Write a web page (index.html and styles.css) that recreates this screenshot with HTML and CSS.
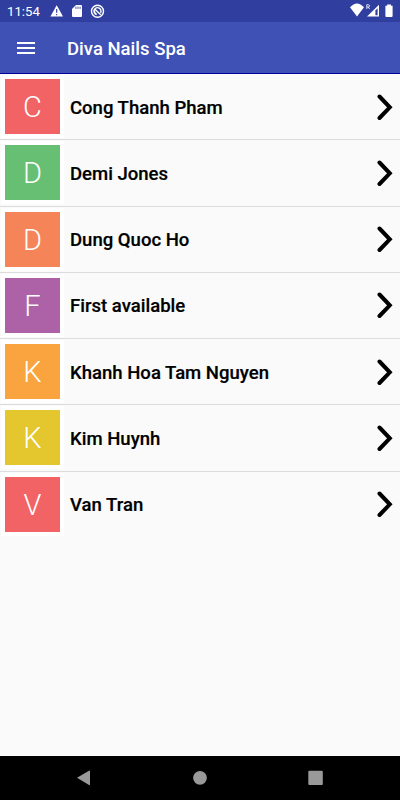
FILE: index.html
```html
<!DOCTYPE html>
<html lang="en">
<head>
<meta charset="utf-8">
<title>Diva Nails Spa</title>
<link rel="stylesheet" href="styles.css">
</head>
<body>
<div class="screen">
  <div class="status">
    <span class="time">11:54</span>
    <svg class="notices" width="56" height="22" viewBox="0 0 56 22">
      <path d="M6.7 5.2 13 16.6H.4Z" fill="#fff"/>
      <path d="M6.7 9v3.700M6.700 13.900v1.400" stroke="#303f9f" stroke-width="1.200"/>
      <path d="M26 5h5q1 0 1 1v10q0 1-1 1h-8q-1 0-1-1V9Z" fill="#fff"/>
      <path d="M25.900 6.700v2.200M28 6.700v2.200M30.100 6.700v2.200" stroke="#303f9f" stroke-width=".9"/>
      <circle cx="47.500" cy="11.200" r="6" fill="none" stroke="#fff" stroke-width="1.400"/>
      <path d="M46 14.300a3.500 3.500 0 1 1 4.600-1.500M44.700 9l6 5.800M44.300 10.500q.2 3 2.500 4" fill="none" stroke="#fff" stroke-width="1.400"/>
    </svg>
    <svg class="signals" width="46" height="22" viewBox="0 0 46 22">
      <path d="M0 7.200Q7-.4 14 7.200L7 16.500Z" fill="#fff"/>
      <path d="M16.800 9V4.700h1.500q1.200 0 1.200 1.200T18.300 7H16.800M18.200 7l1.400 2" fill="none" stroke="#fff" stroke-width=".8"/>
      <path d="M29 4.700V16.600H17Z" fill="#fff"/>
      <path d="M27.600 8.200V15.200H25.400V10.600Z" fill="#303f9f"/>
      <path d="M35.400 5.700h1.700V4.500h3.900v1.200h1.600V16q0 1-1 1h-5.200q-1 0-1-1Z" fill="#fff"/>
    </svg>
  </div>
  <header class="appbar">
    <svg class="menu" width="18" height="12" viewBox="0 0 18 12"><path d="M0 1h18M0 6h18M0 11h18" stroke="#fff" stroke-width="1.900"/></svg>
    <h1 class="title">Diva Nails Spa</h1>
  </header>
  <main class="list">
    <div class="row"><div class="tile red">C</div><span class="name">Cong Thanh Pham</span><svg class="chevron" viewBox="0 0 16 28"><path d="M2.500 3.500 12.800 14.300 2.500 25"/></svg></div>
    <div class="row"><div class="tile green">D</div><span class="name">Demi Jones</span><svg class="chevron" viewBox="0 0 16 28"><path d="M2.500 3.500 12.800 14.300 2.500 25"/></svg></div>
    <div class="row"><div class="tile orange">D</div><span class="name">Dung Quoc Ho</span><svg class="chevron" viewBox="0 0 16 28"><path d="M2.500 3.500 12.800 14.300 2.500 25"/></svg></div>
    <div class="row"><div class="tile purple">F</div><span class="name">First available</span><svg class="chevron" viewBox="0 0 16 28"><path d="M2.500 3.500 12.800 14.300 2.500 25"/></svg></div>
    <div class="row"><div class="tile amber">K</div><span class="name">Khanh Hoa Tam Nguyen</span><svg class="chevron" viewBox="0 0 16 28"><path d="M2.500 3.500 12.800 14.300 2.500 25"/></svg></div>
    <div class="row"><div class="tile yellow">K</div><span class="name">Kim Huynh</span><svg class="chevron" viewBox="0 0 16 28"><path d="M2.500 3.500 12.800 14.300 2.500 25"/></svg></div>
    <div class="row"><div class="tile red">V</div><span class="name">Van Tran</span><svg class="chevron" viewBox="0 0 16 28"><path d="M2.500 3.500 12.800 14.300 2.500 25"/></svg></div>
  </main>
  <nav class="navbar">
    <svg width="400" height="44" viewBox="0 0 400 44" fill="#999">
      <path d="M77 21.800 89 14.700q1-.5 1 .5V28.500q0 1-1 .5Z"/>
      <circle cx="200" cy="21.800" r="6.900"/>
      <rect x="308.300" y="14.800" width="14.500" height="14.200" rx="1"/>
    </svg>
  </nav>
</div>
</body>
</html>
```

FILE: styles.css
```css
body {
  margin: 0;
  font-family: Roboto, sans-serif;
  background: #fafafa;
}
.screen {
  width: 400px;
  height: 800px;
  display: flex;
  flex-direction: column;
  overflow: hidden;
}
.status {
  height: 22px;
  flex: none;
  display: flex;
  background: #303f9f;
  color: #fff;
}
.time {
  width: 43px;
  padding-left: 7px;
  font-size: 13.200px;
  line-height: 23px;
}
.signals {
  margin-left: auto;
  margin-right: 4px;
}
.appbar {
  height: 51px;
  flex: none;
  display: flex;
  align-items: center;
  background: #3f51b5;
  border-bottom: 1px solid #00009c;
}
.menu {
  margin-left: 17px;
}
.title {
  margin: 2px 0 0 32px;
  color: #fff;
  font-size: 18.550px;
  font-weight: 500;
}
.list {
  flex: 1;
}
.row {
  height: 66.250px;
  box-sizing: border-box;
  display: flex;
  align-items: center;
  padding-left: 5px;
  padding-right: 7px;
  border-bottom: 1px solid #dcdcdc;
}
.row:last-child {
  border-bottom-color: transparent;
}
.tile {
  width: 55px;
  height: 55px;
  flex: none;
  box-shadow: 0 0 0 4px #fff;
  color: #fff;
  font-size: 29px;
  font-weight: 300;
  line-height: 57px;
  text-align: center;
}
.red { background: #f16364; }
.green { background: #67bf74; }
.orange { background: #f58559; }
.purple { background: #ad62a7; }
.amber { background: #f9a43e; }
.yellow { background: #e4c62e; }
.name {
  margin-left: 10px;
  margin-top: 2px;
  font-size: 18.550px;
  font-weight: 500;
  color: #000;
  white-space: nowrap;
  -webkit-text-stroke: .2px #000;
}
.chevron {
  width: 16px;
  height: 28px;
  margin-left: auto;
  fill: none;
  stroke: #000;
  stroke-width: 4;
  stroke-linecap: round;
}
.navbar {
  height: 44px;
  flex: none;
  background: #000;
}
.navbar svg {
  display: block;
}
```
